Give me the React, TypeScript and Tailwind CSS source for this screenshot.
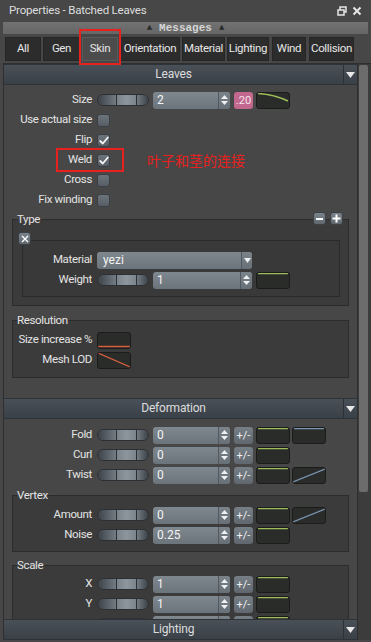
import React from "react";

function Slider() {
  return (
    <div className="flex w-[52px] h-[12px] rounded-[6px] overflow-hidden border border-[#2c3035] shrink-0">
      <div className="w-[19px] h-full border-r border-[#2c3035] bg-[linear-gradient(to_right,#3c4248,#737b83)]" />
      <div className="w-[20px] h-full border-r border-[#2c3035] bg-[linear-gradient(to_right,#7c848b,#8e969d,#7c848b)]" />
      <div className="flex-1 h-full bg-[linear-gradient(to_right,#737b83,#3c4248)]" />
    </div>
  );
}

function Spinner() {
  return (
    <div className="w-[12px] h-full border-l border-[#525860] flex flex-col items-center justify-center gap-[2px] bg-[linear-gradient(to_bottom,#7a828a,#676f77)]">
      <svg width="7" height="4" viewBox="0 0 7 4"><path d="M0 4 L3.5 0 L7 4 Z" fill="#eef0f2" /></svg>
      <svg width="7" height="4" viewBox="0 0 7 4"><path d="M0 0 L7 0 L3.5 4 Z" fill="#eef0f2" /></svg>
    </div>
  );
}

function NumInput({ value, w }: { value: string; w: string }) {
  return (
    <div className={`flex h-[17px] ${w} rounded-[3px] overflow-hidden bg-[linear-gradient(to_bottom,#7f878f,#6b737b)] shrink-0`}>
      <div className="flex-1 pl-[4px] text-[12px] leading-[17px] text-[#f4f4f4]">{value}</div>
      <Spinner />
    </div>
  );
}

function PlusMinus({ blank }: { blank?: boolean }) {
  return (
    <div className="ml-[4px] w-[19px] h-[17px] rounded-[3px] bg-[linear-gradient(to_bottom,#767e86,#60676f)] text-[11px] leading-[17px] text-center text-[#f0f0f0] shrink-0">
      {blank ? "" : "+/-"}
    </div>
  );
}

type CurveKind = "green" | "greenCurve" | "blueTop" | "blueDiag" | "orangeBottom" | "orangeDiag";

function Curve({ kind, className = "" }: { kind: CurveKind; className?: string }) {
  let el: React.ReactNode = null;
  if (kind === "green") el = <line x1="2" y1="1.5" x2="32" y2="1.5" stroke="#9fbd5b" strokeWidth="1.5" />;
  if (kind === "greenCurve") el = <path d="M2 1.5 Q18 2.5 32 9" stroke="#9fbd5b" strokeWidth="1.5" fill="none" />;
  if (kind === "blueTop") el = <line x1="2" y1="1.5" x2="32" y2="1.5" stroke="#7896b2" strokeWidth="1.5" />;
  if (kind === "blueDiag") el = <line x1="1" y1="15" x2="33" y2="2" stroke="#7896b2" strokeWidth="1.3" />;
  if (kind === "orangeBottom") el = <line x1="1" y1="14.5" x2="33" y2="14.5" stroke="#d25c3c" strokeWidth="1.5" />;
  if (kind === "orangeDiag") el = <line x1="1" y1="1" x2="33" y2="15" stroke="#d25c3c" strokeWidth="1.3" />;
  return (
    <div className={`w-[34px] h-[17px] rounded-[3px] bg-[#2a2c2a] border border-[#1a1b1a] shrink-0 overflow-hidden ${className}`}>
      <svg width="32" height="15" viewBox="1 1 32 15">{el}</svg>
    </div>
  );
}

function Checkbox({ checked }: { checked?: boolean }) {
  return (
    <div className="w-[13px] h-[13px] rounded-[3px] border border-[#3a3f45] bg-[linear-gradient(to_bottom,#6b737b,#575e66)] flex items-center justify-center shrink-0">
      {checked && (
        <svg width="10" height="9" viewBox="0 0 10 9">
          <path d="M1.2 5 L3.8 7.5 L8.8 1.5" stroke="#f4f4f4" strokeWidth="1.8" fill="none" strokeLinecap="round" strokeLinejoin="round" />
        </svg>
      )}
    </div>
  );
}

function Row({ label, lw, children }: { label: string; lw: string; children?: React.ReactNode }) {
  return (
    <div className="flex items-center h-[20px]">
      <div className={`${lw} shrink-0 flex justify-end whitespace-nowrap text-[11.5px] tracking-[-0.35px] text-[#e4e4e4]`}>{label}</div>
      <div className="flex items-center ml-[5px]">{children}</div>
    </div>
  );
}

function Header({ title }: { title: string }) {
  return (
    <div className="flex h-[21px] border-y border-[#2e3338] bg-[linear-gradient(to_bottom,#4a5058,#3a4048)] shrink-0">
      <div className="flex-1 text-center text-[12px] leading-[19px] tracking-[-0.2px] text-[#dcdcdc]">{title}</div>
      <div className="w-[14px] border-l border-[#2c3136] flex items-center justify-center">
        <svg width="9" height="6" viewBox="0 0 9 6"><path d="M0 0 L9 0 L4.5 6 Z" fill="#e8e8e8" /></svg>
      </div>
    </div>
  );
}

function Group({ title, className = "", children, extra }: { title: string; className?: string; children?: React.ReactNode; extra?: React.ReactNode }) {
  return (
    <fieldset className={`relative mx-[8px] border border-[#2c2c2c] bg-[#3b3b3b] ${className}`}>
      <legend className="ml-[4px] px-0 text-[11.5px] tracking-[-0.35px] leading-[14px] text-[#e4e4e4]">{title}</legend>
      {extra}
      {children}
    </fieldset>
  );
}

function SmallBtn({ children }: { children: React.ReactNode }) {
  return (
    <div className="w-[13px] h-[13px] rounded-[3px] border border-[#3c4147] bg-[linear-gradient(to_bottom,#7a828a,#606870)] flex items-center justify-center">
      {children}
    </div>
  );
}

const tabs: { name: string; w: string; sel?: boolean; ml: string }[] = [
  { name: "All", w: "w-[36px]", ml: "ml-[5px]" },
  { name: "Gen", w: "w-[37px]", ml: "ml-[2px]" },
  { name: "Skin", w: "w-[36px]", ml: "ml-[2px]", sel: true },
  { name: "Orientation", w: "w-[60px]", ml: "ml-[2px]" },
  { name: "Material", w: "w-[43px]", ml: "ml-[2px]" },
  { name: "Lighting", w: "w-[42px]", ml: "ml-[2px]" },
  { name: "Wind", w: "w-[34px]", ml: "ml-[3px]" },
  { name: "Collision", w: "w-[45px]", ml: "ml-[3px]" },
];

export default function App() {
  return (
    <div className="relative w-[371px] h-[642px] overflow-hidden bg-[#474747] font-['Roboto',sans-serif] select-none">
      {/* Title bar */}
      <div className="flex items-center h-[22px] pl-[9px] pr-[9px]">
        <div className="flex-1 text-[11.5px] tracking-[-0.2px] text-[#dedede]">Properties - Batched Leaves</div>
        <svg width="10" height="10" viewBox="0 0 10 10" className="mr-[5px]">
          <rect x="3" y="1" width="6" height="5" fill="none" stroke="#e6e6e6" strokeWidth="1.5" />
          <rect x="1" y="4" width="6" height="5" fill="#474747" stroke="#e6e6e6" strokeWidth="1.5" />
        </svg>
        <svg width="10" height="10" viewBox="0 0 10 10">
          <path d="M1.5 1.5 L8.5 8.5 M8.5 1.5 L1.5 8.5" stroke="#e6e6e6" strokeWidth="2" />
        </svg>
      </div>

      {/* Messages bar */}
      <div className="mx-[3px] h-[12px] bg-[linear-gradient(to_bottom,#727272,#666666)] flex items-center justify-center gap-[7px] font-['Liberation_Mono',monospace] font-bold text-[11px] leading-[12px]">
        <span className="text-[#2a2a2a] text-[9px]">▲</span>
        <span className="text-[#d6d6d6]">Messages</span>
        <span className="text-[#2a2a2a] text-[9px]">▲</span>
      </div>

      {/* Tabs */}
      <div className="flex h-[24px] mt-[3px]">
        {tabs.map((t) => (
          <div
            key={t.name}
            className={`${t.w} ${t.ml} h-full flex items-center justify-center whitespace-nowrap text-[11.5px] tracking-[-0.35px] text-[#e6e6e6] ${t.sel ? "bg-[#4c4c4c] border border-[#5a5a5a]" : "bg-[#2c2c2c] border border-[#262626]"}`}
          >
            {t.name}
          </div>
        ))}
      </div>

      {/* Main panel */}
      <div className="flex mt-[2px] ml-[3px] h-[577px] border-l border-t border-[#2e2e2e]">
        <div className="flex flex-col w-[353px] h-full">
          <div className="flex-1 overflow-hidden">
            <Header title="Leaves" />
            <div className="pt-[5px]">
              <Row label="Size" lw="w-[88px]">
                <Slider />
                <div className="ml-[4px]"><NumInput value="2" w="w-[77px]" /></div>
                <div className="ml-[4px] w-[19px] h-[17px] rounded-[3px] bg-[#c2678e] text-[11px] leading-[17px] text-center text-[#f6e4ec]">.20</div>
                <Curve kind="greenCurve" className="ml-[3px]" />
              </Row>
              <Row label="Use actual size" lw="w-[88px]"><Checkbox /></Row>
              <Row label="Flip" lw="w-[88px]"><Checkbox checked /></Row>
              <Row label="Weld" lw="w-[88px]">
                <Checkbox checked />
                <span className="ml-[37px] text-[14px] text-[#e8211e] font-['Noto_Sans_CJK_SC',sans-serif]">叶子和茎的连接</span>
              </Row>
              <Row label="Cross" lw="w-[88px]"><Checkbox /></Row>
              <Row label="Fix winding" lw="w-[88px]"><Checkbox /></Row>
            </div>

            <Group
              title="Type"
              className="mt-[2px] pb-[8px]"
              extra={
                <div className="absolute right-[5px] top-[-14px] flex gap-[4px]">
                  <SmallBtn><div className="w-[7px] h-[2px] bg-white" /></SmallBtn>
                  <SmallBtn>
                    <svg width="9" height="9" viewBox="0 0 9 9"><path d="M4.5 0.5 V8.5 M0.5 4.5 H8.5" stroke="white" strokeWidth="2" /></svg>
                  </SmallBtn>
                </div>
              }
            >
              <div className="relative mt-[14px] ml-[9px] mr-[8px] border border-[#2a2a2a] bg-[#393939] pt-[9px] pb-[6px]">
                <div className="absolute left-[-5px] top-[-9px]">
                  <SmallBtn>
                    <svg width="8" height="8" viewBox="0 0 8 8"><path d="M1 1 L7 7 M7 1 L1 7" stroke="white" strokeWidth="1.4" /></svg>
                  </SmallBtn>
                </div>
                <Row label="Material" lw="w-[69px]">
                  <div className="flex w-[155px] h-[17px] rounded-[3px] overflow-hidden bg-[linear-gradient(to_bottom,#7f878f,#6b737b)]">
                    <div className="flex-1 pl-[6px] text-[12px] leading-[17px] text-[#f4f4f4]">yezi</div>
                    <div className="w-[11px] border-l border-[#525860] flex items-center justify-center bg-[linear-gradient(to_bottom,#7a828a,#676f77)]">
                      <svg width="7" height="5" viewBox="0 0 7 5"><path d="M0 0 L7 0 L3.5 5 Z" fill="#eef0f2" /></svg>
                    </div>
                  </div>
                </Row>
                <Row label="Weight" lw="w-[69px]">
                  <Slider />
                  <div className="ml-[4px]"><NumInput value="1" w="w-[99px]" /></div>
                  <Curve kind="green" className="ml-[4px]" />
                </Row>
              </div>
            </Group>

            <Group title="Resolution" className="mt-[7px] pt-[3px] pb-[7px]">
              <Row label="Size increase %" lw="w-[79px]"><Curve kind="orangeBottom" /></Row>
              <Row label="Mesh LOD" lw="w-[79px]"><Curve kind="orangeDiag" /></Row>
            </Group>

            <div className="h-[20px]" />
            <Header title="Deformation" />
            <div className="pt-[6px]">
              <Row label="Fold" lw="w-[88px]">
                <Slider />
                <div className="ml-[4px]"><NumInput value="0" w="w-[77px]" /></div>
                <PlusMinus />
                <Curve kind="green" className="ml-[3px]" />
                <Curve kind="blueTop" className="ml-[2px]" />
              </Row>
              <Row label="Curl" lw="w-[88px]">
                <Slider />
                <div className="ml-[4px]"><NumInput value="0" w="w-[77px]" /></div>
                <PlusMinus />
                <Curve kind="green" className="ml-[3px]" />
              </Row>
              <Row label="Twist" lw="w-[88px]">
                <Slider />
                <div className="ml-[4px]"><NumInput value="0" w="w-[77px]" /></div>
                <PlusMinus />
                <Curve kind="green" className="ml-[3px]" />
                <Curve kind="blueDiag" className="ml-[2px]" />
              </Row>
            </div>

            <Group title="Vertex" className="mt-[3px] pt-[3px] pb-[6px]">
              <Row label="Amount" lw="w-[79px]">
                <Slider />
                <div className="ml-[4px]"><NumInput value="0" w="w-[77px]" /></div>
                <PlusMinus />
                <Curve kind="green" className="ml-[3px]" />
                <Curve kind="blueDiag" className="ml-[2px]" />
              </Row>
              <Row label="Noise" lw="w-[79px]">
                <Slider />
                <div className="ml-[4px]"><NumInput value="0.25" w="w-[77px]" /></div>
                <PlusMinus />
                <Curve kind="green" className="ml-[3px]" />
              </Row>
            </Group>

            <Group title="Scale" className="mt-[6px] pt-[2px] pb-[6px]">
              <Row label="X" lw="w-[79px]">
                <Slider />
                <div className="ml-[4px]"><NumInput value="1" w="w-[77px]" /></div>
                <PlusMinus />
                <Curve kind="green" className="ml-[3px]" />
              </Row>
              <Row label="Y" lw="w-[79px]">
                <Slider />
                <div className="ml-[4px]"><NumInput value="1" w="w-[77px]" /></div>
                <PlusMinus />
                <Curve kind="green" className="ml-[3px]" />
              </Row>
              <Row label="" lw="w-[79px]">
                <Slider />
                <div className="ml-[4px]"><NumInput value="" w="w-[77px]" /></div>
                <PlusMinus blank />
                <Curve kind="green" className="ml-[3px]" />
              </Row>
            </Group>
          </div>
          <Header title="Lighting" />
        </div>

        {/* Scrollbar */}
        <div className="w-[14px] h-full bg-[#3c3c3c] border-l border-[#2e2e2e] pt-[1px]">
          <div className="ml-[1px] w-[9px] h-[427px] rounded-[2px] bg-[#6c6c6c]" />
        </div>
      </div>

      {/* Annotation overlays */}
      <div className="absolute left-[79px] top-[29px] w-[42px] h-[36px] border-2 border-[#e8211e]" />
      <div className="absolute left-[56px] top-[148px] w-[68px] h-[24px] border-2 border-[#e8211e]" />
    </div>
  );
}
